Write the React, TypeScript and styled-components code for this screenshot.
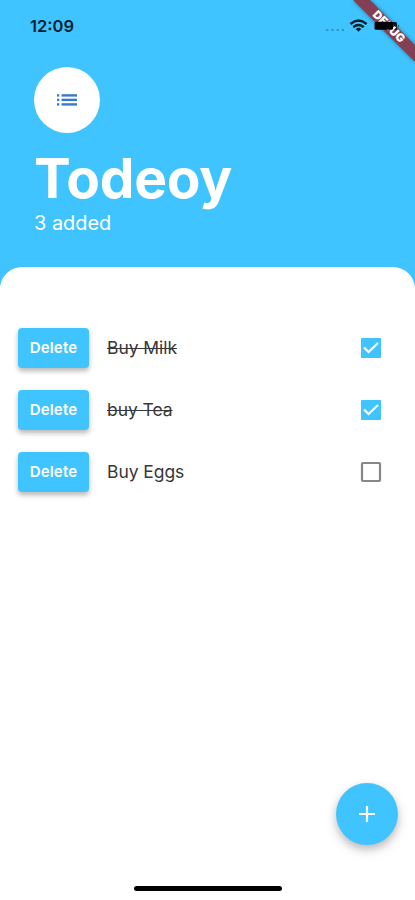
import React, { useState } from "react";
import styled, { createGlobalStyle } from "styled-components";

const SKY = "#40c4ff";

const GlobalStyle = createGlobalStyle`
  *, *::before, *::after { box-sizing: border-box; }
  body { margin: 0; background: #fff; font-family: Inter, "Liberation Sans", sans-serif; }
  button { font: inherit; border: 0; padding: 0; }
`;

const Screen = styled.div`
  position: relative;
  display: flex;
  flex-direction: column;
  width: 415px;
  height: 900px;
  overflow: hidden;
  background: ${SKY};
`;

const StatusBar = styled.div`
  display: flex;
  align-items: center;
  justify-content: space-between;
  height: 51px;
  padding: 0 14px 0 30px;
`;

const Clock = styled.time`
  font-size: 16.5px;
  line-height: 20px;
  font-weight: 600;
  color: #062233;
  margin-top: 1px;
`;

const StatusIcons = styled.svg`
  display: block;
  width: 76px;
  height: 20px;
  margin-top: 1px;
`;

const DebugBanner = styled.svg`
  position: absolute;
  top: 0;
  right: 0;
  width: 75px;
  height: 75px;
`;

const Header = styled.header`
  display: flex;
  flex-direction: column;
  align-items: flex-start;
  height: 216px;
  padding: 16px 34px 0;
  color: #fff;
`;

const Avatar = styled.div`
  display: flex;
  align-items: center;
  justify-content: center;
  width: 66px;
  height: 66px;
  border-radius: 50%;
  background: #fff;
`;

const Title = styled.h1`
  margin: 12px 0 0;
  font-size: 55px;
  line-height: 66px;
  font-weight: 700;
  letter-spacing: -0.2px;
`;

const Subtitle = styled.p`
  margin: 0;
  font-size: 19.9px;
  line-height: 24px;
`;

const Sheet = styled.main`
  flex: 1;
  padding: 49.5px 0 0;
  border-radius: 22px 22px 0 0;
  background: #fff;
`;

const TaskList = styled.ul`
  margin: 0;
  padding: 0;
  list-style: none;
`;

const TaskRow = styled.li`
  display: flex;
  align-items: center;
  height: 62px;
  padding: 0 32px 0 18px;
`;

const DeleteButton = styled.button`
  width: 71px;
  height: 40px;
  padding-bottom: 1px;
  border-radius: 4px;
  background: ${SKY};
  color: #fff;
  font-size: 15px;
  font-weight: 600;
  letter-spacing: 0.15px;
  box-shadow: 0 3px 4px rgba(0, 0, 0, 0.16), 0 3px 6px rgba(0, 0, 0, 0.14);
`;

const TaskName = styled.span<{ $done: boolean }>`
  flex: 1;
  margin-left: 18px;
  font-size: 17.5px;
  line-height: 24px;
  letter-spacing: -0.06px;
  color: #383838;
  text-decoration: ${(p) => (p.$done ? "line-through" : "none")};
  text-decoration-thickness: 1px;
`;

const CheckButton = styled.button`
  width: 24px;
  height: 24px;
  background: none;
`;

const AddButton = styled.button`
  position: absolute;
  left: 336px;
  top: 783px;
  display: flex;
  align-items: center;
  justify-content: center;
  width: 62px;
  height: 62px;
  border-radius: 50%;
  background: ${SKY};
  box-shadow: 0 4px 7px rgba(0, 0, 0, 0.16), 0 5px 13px rgba(0, 0, 0, 0.14);
`;

const HomeIndicator = styled.div`
  position: absolute;
  left: 134px;
  top: 886px;
  width: 148px;
  height: 5px;
  border-radius: 3px;
  background: #000;
`;

const Icon = styled.svg`
  display: block;
`;

function ListIcon() {
  return (
    <Icon width="20" height="14" viewBox="0 0 20 14" fill="#3a78cb">
      {[1.2, 5.7, 10.2].map((y) => (
        <g key={y}>
          <rect x="0" y={y} width="2.2" height="2.4" />
          <rect x="4.6" y={y} width="15.4" height="2.4" />
        </g>
      ))}
    </Icon>
  );
}

function CheckIcon({ checked }: { checked: boolean }) {
  return (
    <Icon width="24" height="24" viewBox="0 0 24 24" fill="none">
      {checked ? (
        <>
          <rect x="2" y="2" width="20" height="20" rx="1" fill={SKY} />
          <path d="M5 11.5 9.5 16 19 7" stroke="#fff" strokeWidth="2.2" />
        </>
      ) : (
        <rect x="3" y="3" width="18" height="18" rx="1" stroke="#868686" strokeWidth="2.2" />
      )}
    </Icon>
  );
}

const initialTasks = [
  { name: "Buy Milk", done: true },
  { name: "buy Tea", done: true },
  { name: "Buy Eggs", done: false },
];

export default function App() {
  const [tasks, setTasks] = useState(initialTasks);

  const toggle = (index: number) =>
    setTasks(tasks.map((t, i) => (i === index ? { ...t, done: !t.done } : t)));
  const remove = (index: number) => setTasks(tasks.filter((_, i) => i !== index));
  const add = () => setTasks([...tasks, { name: "New task", done: false }]);

  return (
    <>
      <GlobalStyle />
      <Screen>
        <StatusBar>
          <Clock>12:09</Clock>
          <StatusIcons viewBox="0 0 76 20">
            <g fill="#2f91bf">
              {[1, 6.2, 11.4, 16.6].map((x) => (
                <rect key={x} x={x} y="12.9" width="2.6" height="2.2" rx="1" />
              ))}
            </g>
            <g fill="none" stroke="#06202c" strokeWidth="2.4">
              <path d="M25.4 8Q33.5 1.2 41.6 8" />
              <path d="M28.3 11.1Q33.5 6.8 38.7 11.1" />
            </g>
            <path d="M30.7 12.9Q33.5 10.8 36.3 12.9L33.5 15.8Z" fill="#06202c" />
          </StatusIcons>
        </StatusBar>

        <Header>
          <Avatar>
            <ListIcon />
          </Avatar>
          <Title>Todeoy</Title>
          <Subtitle>{tasks.length} added</Subtitle>
        </Header>

        <Sheet>
          <TaskList>
            {tasks.map((task, i) => (
              <TaskRow key={task.name + i}>
                <DeleteButton onClick={() => remove(i)}>Delete</DeleteButton>
                <TaskName $done={task.done}>{task.name}</TaskName>
                <CheckButton aria-label={task.name} onClick={() => toggle(i)}>
                  <CheckIcon checked={task.done} />
                </CheckButton>
              </TaskRow>
            ))}
          </TaskList>
        </Sheet>

        <AddButton aria-label="Add task" onClick={add}>
          <Icon width="16" height="16" viewBox="0 0 16 16" stroke="#fff" strokeWidth="2.2">
            <path d="M8 0v16M0 8h16" />
          </Icon>
        </AddButton>
        <HomeIndicator />

        <DebugBanner viewBox="0 0 75 75">
          <defs>
            <filter id="bannerShadow" x="-20%" y="-20%" width="140%" height="140%">
              <feGaussianBlur stdDeviation="2" />
            </filter>
          </defs>
          <path d="M13 0H30L75 45V62Z" fill="#000" opacity=".4" filter="url(#bannerShadow)" />
          <path d="M13 0H30L75 45V62Z" fill="#843f54" />
          <path d="M52 22h3.5a1.5 1.5 0 0 1 1.5 1.5v5a1.5 1.5 0 0 1-1.5 1.5H52z" fill="#000" opacity=".85" />
          <path d="M58.2 24.5q1.8 1.6 0 3.2z" fill="#0b3445" />
          <text
            x="49"
            y="26.5"
            transform="rotate(45 49 26.5)"
            textAnchor="middle"
            dominantBaseline="central"
            fill="#fff"
            fontFamily="Inter, sans-serif"
            fontSize="11.5"
            fontWeight="900"
          >
            DEBUG
          </text>
          {/* The battery's body covers the middle letters of the ribbon. */}
          <rect x="34.5" y="21.8" width="18.5" height="8" rx="1.6" fill="#000" />
        </DebugBanner>
      </Screen>
    </>
  );
}
